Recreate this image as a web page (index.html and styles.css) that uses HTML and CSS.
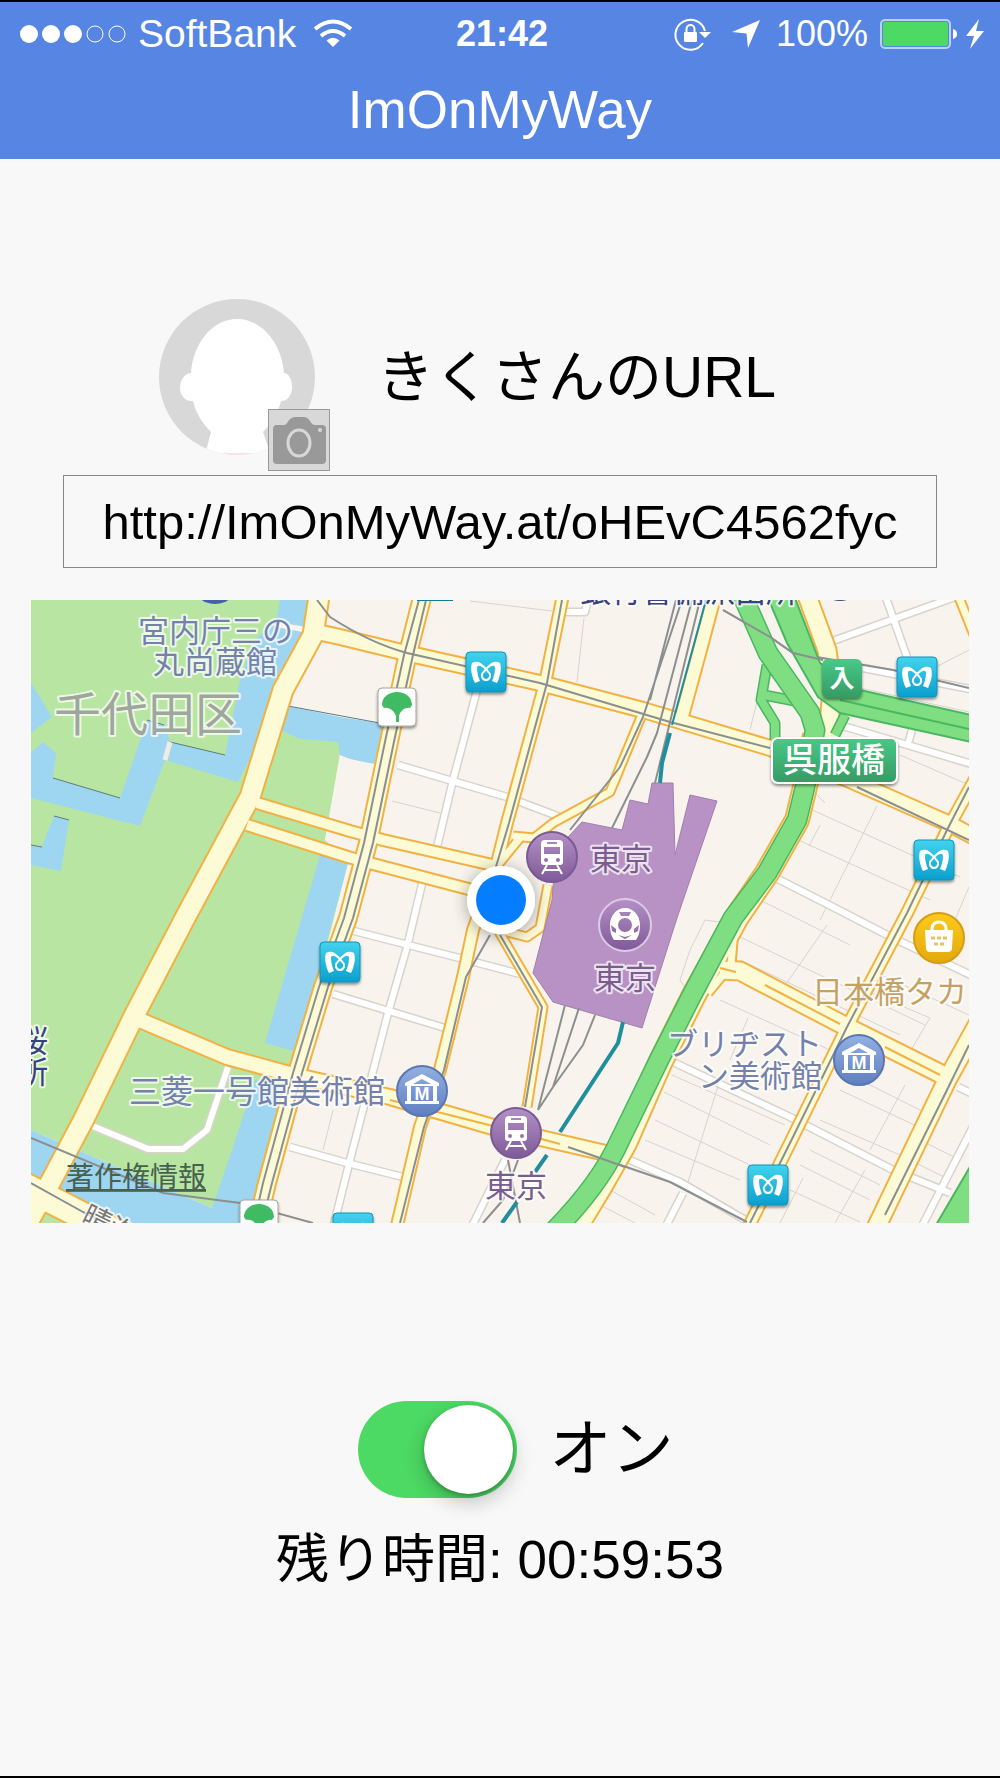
FILE: index.html
```html
<!DOCTYPE html>
<html lang="ja">
<head>
    <meta charset="UTF-8">
    <meta name="viewport" content="width=device-width, initial-scale=1.0">
    <title>ImOnMyWay</title>
    <link rel="stylesheet" href="styles.css">
</head>
<body>

    <header>
        <div class="status-bar">
            <div class="status-left">
                <svg class="signal" width="108" height="20" viewBox="0 0 108 20" aria-hidden="true">
                    <circle cx="9" cy="10" r="9"/>
                    <circle cx="31" cy="10" r="9"/>
                    <circle cx="53" cy="10" r="9"/>
                    <circle class="empty" cx="75" cy="10" r="8"/>
                    <circle class="empty" cx="97" cy="10" r="8"/>
                </svg>
                <span class="carrier">SoftBank</span>
                <svg class="wifi" width="38" height="30" viewBox="0 0 38 30" aria-hidden="true">
                    <path class="arc" d="M1 10 Q19 -5 37 10"/>
                    <path class="arc" d="M7 17 Q19 7 31 17"/>
                    <path d="M12.500 21.500 Q19 16 25.500 21.500 L19 28 Z"/>
                </svg>
            </div>
            <time class="clock">21:42</time>
            <div class="status-right">
                <svg class="lock" width="38" height="34" viewBox="0 0 38 34" aria-hidden="true">
                    <path class="thin" d="M29 26 A15 15 0 1 1 31 14"/>
                    <path d="M25 15 H37 L31 21 Z"/>
                    <rect x="10" y="15" width="13" height="10" rx="1"/>
                    <path class="thin" d="M12.500 15 V12 A4 4 0 0 1 20.500 12 V15"/>
                </svg>
                <svg class="arrow" width="28" height="28" viewBox="0 0 28 28" aria-hidden="true">
                    <path d="M28 0 L16 28 L14.500 13.500 L0 12 Z"/>
                </svg>
                <span class="level">100%</span>
                <svg width="78" height="30" viewBox="0 0 78 30" aria-hidden="true">
                    <rect class="cell" x="1" y="1" width="69" height="28" rx="4"/>
                    <rect class="charge" x="3" y="3" width="65" height="24" rx="2"/>
                    <path d="M73 10 Q77 11 77 15 Q77 19 73 20 Z"/>
                </svg>
                <svg width="18" height="30" viewBox="0 0 18 30" aria-hidden="true">
                    <path d="M13 0 L0 17 H8 L4 30 L18 12 H10 Z"/>
                </svg>
            </div>
        </div>
        <h1>ImOnMyWay</h1>
    </header>

    <main>
        <section class="profile">
            <div class="avatar">
                <svg class="face" viewBox="0 0 156 156" role="img" aria-label="プロフィール画像">
                    <defs>
                        <clipPath id="round"><circle cx="78" cy="78" r="78"/></clipPath>
                    </defs>
                    <g clip-path="url(#round)">
                        <rect width="156" height="156" fill="#d8d8d8"/>
                        <path fill="#fff" d="M78 20 C104 20 123 46 125 74 C130 74 133 81 133 88 C133 96 129 102 122 102 C119 114 113 125 104 133 L112 156 H46 L52 133 C43 124 37 114 34 102 C27 103 21 97 21 89 C21 81 26 74 32 74 C34 46 52 20 78 20 Z"/>
                        <path d="M64 155 H92" stroke="#f3c4c4"/>
                    </g>
                </svg>
                <button class="camera" type="button" aria-label="写真を変更">
                    <svg viewBox="0 0 60 60" aria-hidden="true">
                        <path fill="#999" d="M8 15 H16 Q18 14 20 10 Q23 7 26 7 H35 Q38 7 41 11 Q43 15 46 15 H53 Q57 15 57 19 V50 Q57 54 53 54 H8 Q4 54 4 50 V19 Q4 15 8 15 Z"/>
                        <ellipse cx="30" cy="33" rx="11" ry="13" fill="none" stroke="#d8d8d8" stroke-width="3"/>
                        <circle cx="51" cy="20" r="2" fill="#d8d8d8"/>
                    </svg>
                </button>
            </div>
            <h2><label for="shareUrl">きくさんのURL</label></h2>
        </section>

        <input class="share-url" type="text" id="shareUrl" value="http://ImOnMyWay.at/oHEvC4562fyc" readonly>

        <!-- Map around Tokyo station -->
        <svg class="map" viewBox="31 600 938 623" role="group" aria-label="地図">
            <defs>
                <linearGradient id="metroFill" x1="0" y1="0" x2="0" y2="1">
                    <stop offset="0" stop-color="#42d3ee"/><stop offset="1" stop-color="#0b9fce"/>
                </linearGradient>
                <linearGradient id="greenFill" x1="0" y1="0" x2="0" y2="1">
                    <stop offset="0" stop-color="#48c988"/><stop offset="1" stop-color="#369a63"/>
                </linearGradient>
                <linearGradient id="trainFill" x1="0" y1="0" x2="0" y2="1">
                    <stop offset="0" stop-color="#b490c6"/><stop offset="1" stop-color="#7f5a99"/>
                </linearGradient>
                <linearGradient id="museumFill" x1="0" y1="0" x2="0" y2="1">
                    <stop offset="0" stop-color="#93b0e2"/><stop offset="1" stop-color="#5f7fc0"/>
                </linearGradient>
                <linearGradient id="shopFill" x1="0" y1="0" x2="0" y2="1">
                    <stop offset="0" stop-color="#fcca1c"/><stop offset="1" stop-color="#e3a90c"/>
                </linearGradient>
                <filter id="soft" x="-50%" y="-50%" width="200%" height="200%">
                    <feDropShadow dx="0" dy="2" stdDeviation="1.500" flood-opacity="0.45"/>
                </filter>
                <filter id="dotShadow" x="-50%" y="-50%" width="200%" height="200%">
                    <feDropShadow dx="0" dy="2" stdDeviation="8" flood-opacity="0.35"/>
                </filter>

                <g id="metro">
                    <rect x="-20" y="-20" width="40" height="40" rx="4" fill="url(#metroFill)" stroke="#1591b8" filter="url(#soft)"/>
                    <path fill="#fff" d="M-14 -9 C-9 -12 -4 -9 -2 -4 C-6 -7 -9 -7 -9 -4 C-9 0 -8 4 -6 9 L-11 11 C-14 5 -16 -3 -14 -9 Z M14 -9 C9 -12 4 -9 2 -4 C6 -7 9 -7 9 -4 C9 0 8 4 6 9 L11 11 C14 5 16 -3 14 -9 Z"/>
                    <path fill="none" stroke="#fff" stroke-width="2" d="M-8 -9 C-3 -7 1 -2 4 2 C5 6 2 8 0 8 C-2 8 -5 6 -4 2 C-1 -2 3 -7 8 -9"/>
                </g>
                <g id="ginkgo">
                    <rect x="-19" y="-19" width="38" height="38" rx="4" fill="#fff" stroke="#a9a59e" filter="url(#soft)"/>
                    <path fill="#41bb63" d="M-15 -2 C-15 -10 -8 -15 0 -15 C8 -15 15 -10 15 -2 L13 1 C7 0 3 5 2 9 V15 H-1 V9 C-3 4 -7 0 -13 1 Z"/>
                </g>
                <g id="train">
                    <circle r="25" fill="url(#trainFill)" stroke="#7a5b93" stroke-width="2"/>
                    <path fill="#fff" fill-rule="evenodd" d="M-7 -17 H7 Q11 -17 11 -13 V5 Q11 8 8 8 H-8 Q-11 8 -11 5 V-13 Q-11 -17 -7 -17 Z M-5 -15 V-13 H5 V-15 Z M-8 -10 V-3 H8 V-10 Z M-8 3 A2 2 0 0 0 -4 3 A2 2 0 0 0 -8 3 Z M4 3 A2 2 0 0 0 8 3 A2 2 0 0 0 4 3 Z"/>
                    <path fill="none" stroke="#fff" stroke-width="2" d="M-5 8 L-10 17 M5 8 L10 17 M-8 13 H8"/>
                </g>
                <g id="museum">
                    <circle r="25" fill="url(#museumFill)" stroke="#5b76b3" stroke-width="2"/>
                    <path fill="#fff" fill-rule="evenodd" d="M0 -17 L17 -8 V-5 H-17 V-8 Z M0 -12 L-9 -7 H9 Z"/>
                    <path fill="#fff" d="M-15 -5 H-11 V10 H-15 Z M11 -5 H15 V10 H11 Z M-17 10 H17 V13 H-17 Z"/>
                    <text class="museum-m" y="9">M</text>
                </g>

                <!-- Yellow roads, drawn once as casing and once as fill -->
                <g id="roads">
                    <path class="w19" d="M320 590 L313 635 L283 690 L250 797 L185 918 L133 1018 L83 1121 L50 1183 L25 1228"/>
                    <path class="w26" d="M20 1184 L130 1240"/>
                    <path class="w14" d="M313 631 L340 637 L410 654 L540 683 L643 710 L770 748 L850 780 L950 824 L980 840"/>
                    <path class="w16" d="M424 590 L408 653 L390 737 L368 843 L348 918 L323 987 L297 1073 L267 1183 L256 1230"/>
                    <path class="w10" d="M564 590 L545 683 L507 823 L497 863 L473 930 L463 977 L440 1070 L420 1127 L396 1230"/>
                    <path class="w10" d="M257 803 L350 831 L383 840 L497 866"/>
                    <path class="w10" d="M247 825 L348 857 L373 864 L480 892"/>
                    <path class="w14" d="M135 1018 L227 1057 L297 1076 L390 1097 L493 1127 L610 1154"/>
                    <path class="w7" d="M513 836 L534 838 L553 823 L610 792 L643 712"/>
                    <path class="w7" d="M497 866 L520 838 M548 885 L540 928 L527 937 L500 930"/>
                    <path class="w12" d="M682 716 L700 650 L716 590"/>
                    <path class="w7" d="M498 930 L543 1007 L527 1107"/>
                    <path class="w10" d="M980 770 L947 830 L933 860 L907 913 L847 1027 L790 1143 L747 1230"/>
                    <path class="w17" d="M720 970 L740 971 L847 1027 L943 1075"/>
                    <path class="w17" d="M980 1020 L947 1080 L875 1230"/>
                    <path class="w7" d="M735 917 L731 965 L708 993"/>
                    <path class="w17" d="M805 590 L827 650 L832 690 L828 735"/>
                    <path class="w7" d="M956 590 L974 635"/>
                    <path class="w22" d="M815 735 L805 787 L797 820 L767 873 L737 917 L693 997 L660 1063 L625 1143 L600 1187 L574 1230"/>
                </g>

                <!-- White side streets -->
                <g id="streets">
                    <path d="M477 690 L453 780 L437 847 M398 765 L507 797 L560 817 M423 880 L407 947 L388 1013 L350 1160 L333 1228"/>
                    <path d="M350 930 L467 960 L520 974 M333 994 L445 1028 M290 1147 L347 1163 L407 1178 M505 1160 L470 1230"/>
                    <path d="M830 642 L955 597 M885 595 L907 657 M863 668 L975 690 M833 723 L975 765 M912 730 L907 747"/>
                    <path d="M770 875 L833 907 L893 938 L975 977 M673 1062 L790 1117 L893 1170 L950 1193 M975 1123 L921 1228"/>
                    <path d="M958 1087 L975 1095 M623 1157 L680 1182 L747 1221 M683 1193 L665 1228 M563 612 L585 612 L589 595"/>
                    <path d="M90 1125 L148 1149 L183 1149 L207 1130 L228 1067"/>
                </g>
            </defs>

            <rect x="31" y="600" width="938" height="623" fill="#f8f4ed"/>

            <!-- Parks -->
            <g fill="#b8e6a2">
                <path d="M31 600 H320 L283 728 L342 742 L325 840 L348 863 L290 1090 L212 1208 L31 1130 Z"/>
            </g>

            <!-- Moats -->
            <g fill="#9ed6f1">
                <path d="M280 600 H318 L310 640 L285 690 L238 782 L165 760 L140 826 L31 798 V752 L43 742 L56 753 L53 778 L120 798 L147 720 L165 725 L170 742 L225 755 L240 680 L254 640 L276 622 Z"/>
                <path d="M31 683 L52 717 L31 733 Z"/>
                <path d="M54 816 L69 820 L61 871 L31 865 V846 L42 846 Z"/>
                <path d="M288 706 L340 717 L385 724 L374 764 Q355 762 340 755 L338 742 L300 739 L280 730 Z"/>
                <path d="M320 855 L348 863 L297 1052 L265 1043 Z"/>
                <path d="M31 1130 L212 1208 L232 1150 L255 1080 L290 1085 L255 1223 H31 Z"/>
            </g>
            <path fill="#f8f4ed" d="M325 840 L330 815 L352 822 L347 848 Z M340 757 L374 764 L352 830 L328 826 Z M276 622 L313 628 V634 L276 627 Z"/>
            <path fill="#b8e6a2" d="M47 1206 L76 1225 H36 Z"/>
            <path class="bank" d="M53 778 L120 798 M170 742 L225 755 M54 816 L69 820 M31 845 L42 847 M147 720 L164 725 M288 706 L385 724 M320 855 L348 863"/>
            <path d="M170 742 L165 760" stroke="#efece4" stroke-width="5"/>

            <!-- Building lots -->
            <g class="lots">
                <path d="M809 787 L825 803 M808 808 L960 877 M794 838 L930 900 M760 900 L850 945 M820 825 L809 846 M877 806 L820 920 M969 887 L940 955"/>
                <path d="M740 937 L925 1025 M740 960 L900 1035 M720 1000 L830 1050 M840 780 L960 830 M900 755 L969 785 M827 925 L775 1000"/>
                <path d="M865 990 L930 1018 M870 970 L969 1015 M930 1018 L905 1060 M840 1090 L925 1130 M850 1075 L940 1120 M820 1120 L900 1155 M905 1085 L870 1150"/>
                <path d="M672 1075 L785 1125 M664 1092 L770 1145 M655 1120 L750 1165 M645 1140 L740 1180 M720 1080 L687 1185 M748 1018 L730 1060"/>
                <path d="M810 1150 L880 1185 M800 1165 L870 1200 M790 1190 L860 1222 M803 1178 L780 1223 M865 1170 L835 1223 M610 1190 L655 1215 M600 1205 L635 1223"/>
                <path d="M920 1140 L960 1160 M910 1160 L950 1180 M470 601 L552 611 M584 618 L577 682 M392 801 L440 813 M333 1110 L323 1150 M761 685 L750 730"/>
                <path d="M840 698 L969 725 M860 688 L969 712 M930 670 L969 650 M690 995 L680 980 L690 950 L705 920 L720 922"/>
            </g>

            <use href="#streets" class="street-casing"/>
            <use href="#streets" class="street-fill"/>
            <use href="#roads" class="road-casing"/>
            <use href="#roads" class="road-fill"/>
            <path class="median" d="M765 985 L840 1024 M885 1047 L940 1075 M720 968 L736 972 M390 1100 L493 1126 L560 1144"/>

            <!-- Station building -->
            <path fill="#b892c4" stroke="#a07fae" d="M582 822 L622 830 L630 800 L648 804 L652 783 L673 783 L675 855 L690 795 L717 801 L677 918 L642 1028 L553 1002 L533 973 L552 900 L556 850 Z"/>

            <!-- Railways -->
            <g class="rails">
                <path d="M317 600 L330 617 Q370 643 407 653 L540 683 L670 722 L770 748 M857 787 L969 840"/>
                <path d="M419 600 L404 655 L386 737 L364 843 L344 918 L319 987 L293 1073 L263 1183 L254 1223"/>
                <path d="M426 600 L413 655 L395 737 L373 843 L353 918 L328 987 L302 1073 L272 1183 L262 1223"/>
                <path d="M562 600 L547 683 L509 823 L495 870 M490 935 L466 977 L444 1070 L424 1127 L400 1223"/>
                <path d="M682 600 L643 717 L620 767 L570 830 M676 600 L650 700 M692 600 L657 733 L647 757 L612 828 M700 600 L655 783"/>
                <path d="M500 935 L542 1007 L525 1107 M565 1005 L538 1110 M579 1008 L553 1087 M595 1015 L583 1045 L553 1087 L538 1110"/>
                <path d="M508 1160 L520 1223 M518 1160 L503 1200 L483 1223 M723 610 L770 637 L793 653 L893 670 L969 688"/>
                <path d="M568 1147 L600 1158 L670 1182 L747 1222 M969 787 L947 830 L907 913 L847 1027 L790 1143 L750 1223 M969 1045 L947 1090 L885 1215"/>
                <path d="M31 1138 L163 1193 L240 1203 L313 1223 M31 1183 L83 1212 L105 1223"/>
            </g>
            <g class="line-teal">
                <path d="M706 600 L672 725" stroke-width="2"/>
                <path d="M670 733 L662 763 L660 783 M623 1022 L618 1043 L560 1132 M547 1155 L535 1172 M517 1202 L502 1223"/>
            </g>

            <!-- Expressway -->
            <g class="ramp">
                <path stroke="#4ab661" stroke-width="11" d="M767 665 L761 700 L775 723 V740 M764 695 L800 702 M845 715 L835 735"/>
                <path stroke="#80de82" stroke-width="8" d="M767 665 L761 700 L775 723 V740 M764 695 L800 702 M845 715 L835 735"/>
                <path stroke="#4ab661" stroke-width="21" d="M740 590 L768 653 L810 713 L815 730 L805 787 L797 820 L767 873 L733 918 L693 993 L660 1058 L620 1140 Q600 1185 550 1235"/>
                <path stroke="#80de82" stroke-width="18" d="M740 590 L768 653 L810 713 L815 730 L805 787 L797 820 L767 873 L733 918 L693 993 L660 1058 L620 1140 Q600 1185 550 1235"/>
            </g>
            <path fill="#80de82" stroke="#4ab661" stroke-width="2" d="M768 598 H795 L820 663 L860 690 L971 715 V742 L840 713 L818 697 L787 643 Z M971 1165 L936 1225 H971 Z"/>
            <path fill="none" stroke="#4ab661" stroke-width="2" d="M840 700 L969 729"/>
            <path class="rails" d="M723 610 L770 637 L793 653 L823 660 M600 1158 L625 1167"/>

            <!-- Place names -->
            <g class="label museum-label">
                <text x="138" y="642">宮内庁三の</text>
                <text x="153" y="673">丸尚蔵館</text>
                <text class="wide" x="129" y="1103">三菱一号館美術館</text>
                <text x="822" y="1055" text-anchor="end">ブリヂスト</text>
                <text x="822" y="1087" text-anchor="end">ン美術館</text>
            </g>
            <g class="label navy-label">
                <text x="580" y="602">銀行警備派出所</text>
                <text x="17" y="1052">桜</text>
                <text x="17" y="1083">所</text>
            </g>
            <text class="label ward-label" x="54" y="731">千代田区</text>
            <text class="label road-label" x="80" y="1222" transform="rotate(26 80 1222)">晴海</text>

            <!-- Pins -->
            <circle cx="215" cy="580" r="24" fill="#4560a8"/>
            <circle cx="840" cy="577" r="24" fill="#3c4a80"/>
            <rect x="417" y="590" width="36" height="11" fill="#0f7f98"/>
            <use href="#metro" x="486" y="672"/>
            <use href="#metro" x="917" y="677"/>
            <use href="#metro" x="934" y="860"/>
            <use href="#metro" x="768" y="1185"/>
            <use href="#metro" x="340" y="962"/>
            <use href="#metro" x="353" y="1233"/>
            <use href="#ginkgo" x="397" y="707"/>
            <use href="#ginkgo" x="259" y="1219"/>
            <use href="#museum" x="422" y="1091"/>
            <use href="#museum" x="859" y="1060"/>
            <use href="#train" x="552" y="857"/>
            <use href="#train" x="516" y="1133"/>

            <g transform="translate(625 925)">
                <circle r="26" fill="url(#trainFill)" stroke="#dccbe4" stroke-width="2"/>
                <path fill="#fff" fill-rule="evenodd" d="M0 -17 C9 -17 15 -9 15 0 C15 8 13 12 11 15 H-11 C-13 12 -15 8 -15 0 C-15 -9 -9 -17 0 -17 Z M-6 -13 L-4 -9 H4 L6 -13 Z M0 -7 A7 7 0 1 0 0 7 A7 7 0 1 0 0 -7 Z M-14 0 L-9 4 V8 L-13 6 Z M14 0 L9 4 V8 L13 6 Z M-7 10 L0 12 L7 10 L0 14 Z"/>
            </g>

            <g transform="translate(939 938)">
                <circle r="25" fill="url(#shopFill)" stroke="#d79c10" stroke-width="2"/>
                <path fill="#fff" d="M-14 -8 H14 L13 10 Q13 14 9 14 H-9 Q-13 14 -13 10 Z"/>
                <path fill="none" stroke="#fff" stroke-width="3" d="M-7 -8 V-10 Q-6 -16 0 -16 Q6 -16 7 -10 V-8"/>
                <path stroke="#e3c468" stroke-width="3" stroke-dasharray="4 2" d="M-8 0 H9 M-5 6 H5"/>
            </g>

            <g class="label station-label">
                <text x="590" y="870">東京</text>
                <text x="594" y="989">東京</text>
                <text x="485" y="1197">東京</text>
            </g>
            <text class="label shop-label" x="812" y="1003">日本橋タカ</text>

            <g class="sign">
                <rect x="822" y="659" width="40" height="39" rx="6" fill="url(#greenFill)" filter="url(#soft)"/>
                <text class="entrance" x="842" y="687">入</text>
                <rect x="772" y="738" width="125" height="45" rx="6" fill="url(#greenFill)" stroke="#fff" stroke-width="2" filter="url(#soft)"/>
                <text class="junction" x="834" y="772">呉服橋</text>
            </g>

            <!-- Current position -->
            <circle cx="501" cy="900" r="34" fill="#fff" filter="url(#dotShadow)"/>
            <circle cx="501" cy="900" r="25" fill="#047eff"/>

            <a href="#legal"><text class="legal" x="66" y="1187">著作権情報</text></a>
        </svg>

        <section class="sharing">
            <div class="switch-row">
                <input class="switch" type="checkbox" role="switch" id="sharing" checked>
                <label for="sharing">オン</label>
            </div>
            <p class="remaining">残り時間: 00:59:53</p>
        </section>
    </main>

</body>
</html>
```

FILE: styles.css
```css
* {
    box-sizing: border-box;
}

body {
    font-family: "Liberation Sans", "Noto Sans CJK JP", sans-serif;
    font-weight: 400;
    background-color: #f8f8f8;
    color: #000;
    margin: 0;
    min-height: 100vh;
    border-top: 2px solid #000;
    border-bottom: 2px solid #000;
}

header {
    background: #5685e3;
    color: #fff;
    padding-bottom: 5px;
}

/* Status bar */
.status-bar {
    display: grid;
    grid-template-columns: 1fr auto 1fr;
    align-items: center;
    height: 64px;
    padding: 0 16px 0 20px;
    font-size: 36px;
}

.status-bar svg {
    fill: #fff;
    flex: none;
}

.status-left,
.status-right {
    display: flex;
    align-items: center;
}

.status-left {
    gap: 10px;
}

.status-right {
    justify-content: flex-end;
    gap: 8px;
}

.carrier {
    font-size: 39px;
}

.wifi {
    margin-left: 8px;
}

.lock {
    margin-right: 12px;
}

.arrow {
    margin-right: 8px;
}

.level {
    margin-right: 4px;
}

.clock {
    font-weight: 700;
}

.signal .empty {
    fill: none;
    stroke: #fff;
}

.status-bar .arc {
    fill: none;
    stroke: #fff;
    stroke-width: 4;
}

.status-bar .thin {
    fill: none;
    stroke: #fff;
    stroke-width: 2;
}

.status-bar .cell {
    fill: none;
    stroke: #b9d0f8;
    stroke-width: 2;
}

.status-bar .charge {
    fill: #4cd964;
}

h1 {
    margin: 0;
    font-size: 53px;
    font-weight: 400;
    line-height: 88px;
    text-align: center;
}

main {
    padding: 140px 31px 0;
}

/* Profile */
.profile {
    display: flex;
    align-items: center;
    gap: 62px;
    padding-left: 128px;
}

.avatar {
    position: relative;
    width: 156px;
    height: 156px;
    flex: none;
}

.face {
    display: block;
    width: 100%;
}

.camera {
    position: absolute;
    right: -15px;
    bottom: -16px;
    width: 62px;
    height: 62px;
    padding: 0;
    background: #d8d8d8;
    border: 1px solid #999;
}

.camera svg {
    display: block;
}

h2 {
    margin: 0;
    font-size: 57px;
    font-weight: 400;
    line-height: 80px;
}

.share-url {
    display: block;
    width: calc(100% - 64px);
    height: 93px;
    margin: 20px auto 32px;
    padding: 0;
    background: transparent;
    border: 1px solid #888;
    border-radius: 0;
    color: #000;
    font: inherit;
    font-size: 49px;
    text-align: center;
}

/* Map */
.map {
    display: block;
    width: 100%;
    overflow: hidden;
}

.map path {
    stroke-linejoin: round;
}

.w7 { --w: 7; }
.w10 { --w: 10; }
.w12 { --w: 12; }
.w14 { --w: 14; }
.w16 { --w: 16; }
.w17 { --w: 17; }
.w19 { --w: 19; }
.w22 { --w: 22; }
.w26 { --w: 26; }

#roads path {
    fill: none;
    stroke-width: calc(var(--w) * 1px + var(--edge));
}

.road-casing {
    --edge: 4px;
    stroke: #f2b243;
}

.road-fill {
    --edge: 0px;
    stroke: #fdfad6;
}

.street-casing {
    fill: none;
    stroke: #d8d3cb;
    stroke-width: 9;
}

.street-fill {
    fill: none;
    stroke: #fff;
    stroke-width: 6;
}

.lots {
    fill: none;
    stroke: #d6d4cf;
    stroke-width: 1;
}

.bank {
    fill: none;
    stroke: #5f7c78;
    stroke-width: 1;
}

.median {
    fill: none;
    stroke: #f2b243;
    stroke-width: 2;
}

.rails {
    fill: none;
    stroke: #8b8f90;
    stroke-width: 2;
}

.line-teal {
    fill: none;
    stroke: #1f8f9d;
    stroke-width: 4;
}

.ramp {
    fill: none;
}

.label {
    font-family: "Noto Sans CJK JP", sans-serif;
    font-size: 31px;
    stroke: rgba(255, 255, 255, 0.75);
    stroke-width: 4px;
    stroke-linejoin: round;
    paint-order: stroke;
}

.museum-label {
    fill: #7482ab;
}

.museum-label .wide {
    font-size: 32px;
}

.navy-label {
    fill: #38427c;
}

.station-label {
    fill: #785d8e;
}

.shop-label {
    fill: #c6a262;
}

.road-label {
    fill: #777;
    font-size: 28px;
}

.ward-label {
    fill: #9fa69b;
    font-size: 47px;
}

.museum-m {
    fill: #fff;
    font-size: 18px;
    font-weight: 700;
    text-anchor: middle;
}

.sign text {
    fill: #fff;
    font-family: "Noto Sans CJK JP", sans-serif;
    text-anchor: middle;
}

.sign .entrance {
    font-size: 25px;
    font-weight: 700;
}

.sign .junction {
    font-size: 34px;
    font-weight: 500;
}

.legal {
    fill: #47604f;
    font-family: "Noto Sans CJK JP", sans-serif;
    font-size: 28px;
    text-decoration: underline;
    text-decoration-thickness: 3px;
}

/* Sharing switch */
.sharing {
    padding-top: 178px;
}

.switch-row {
    display: flex;
    align-items: center;
    justify-content: center;
    gap: 32px;
    padding-left: 32px;
    font-size: 62px;
    line-height: 97px;
}

.switch {
    appearance: none;
    display: flex;
    align-items: center;
    justify-content: flex-end;
    width: 159px;
    height: 97px;
    margin: 0;
    padding: 4px;
    background: #4cd964;
    border-radius: 49px;
}

.switch::before {
    content: "";
    width: 89px;
    height: 89px;
    background: #fff;
    border-radius: 50%;
    box-shadow: 0 8px 20px rgba(0, 0, 0, 0.22), 0 2px 4px rgba(0, 0, 0, 0.25);
}

.switch:not(:checked) {
    justify-content: flex-start;
    background: #ddd;
}

.remaining {
    margin: 22px 0 0;
    font-size: 53px;
    line-height: 80px;
    text-align: center;
}
```
